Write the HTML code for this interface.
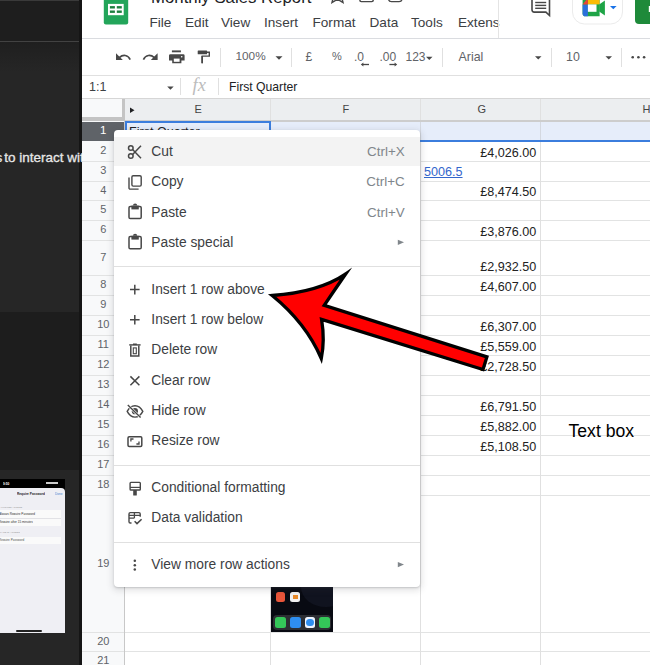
<!DOCTYPE html>
<html><head><meta charset="utf-8">
<style>
*{margin:0;padding:0;box-sizing:border-box}
html,body{width:650px;height:665px;overflow:hidden;background:#fff;font-family:"Liberation Sans",sans-serif}
.a{position:absolute}
.t{position:absolute;white-space:nowrap;line-height:1}
.hl{position:absolute;height:1px;background:#e2e3e3}
.vl{position:absolute;width:1px;background:#e2e3e3}
.rn{position:absolute;left:82px;width:42.5px;text-align:center;font-size:11px;color:#5f6368;line-height:1}
.num{position:absolute;left:420px;width:116.3px;text-align:right;font-size:12.6px;color:#222;white-space:nowrap;line-height:1}
.mi{position:absolute;left:151.3px;font-size:13.8px;color:#3c4043;white-space:nowrap;line-height:1}
.sc{position:absolute;left:300px;width:104.7px;text-align:right;font-size:13.4px;color:#80868b;white-space:nowrap;line-height:1}
.tb{position:absolute;white-space:nowrap;line-height:1;font-size:12px;color:#5f6368}
</style></head><body>

<div class="a" style="left:0;top:0;width:82px;height:665px;background:#262626"></div>
<div class="a" style="left:0;top:0;width:82px;height:41px;background:#1e1e1e"></div>
<div class="a" style="left:0;top:42px;width:82px;height:30px;background:linear-gradient(#1f1f1f,#262626)"></div>
<div class="a" style="left:0;top:312px;width:82px;height:158px;background:#1d1d1d"></div>
<div class="a" style="left:0;top:0;width:80px;height:1px;background:#3a3a3a"></div>
<div class="a" style="left:0;top:41px;width:80px;height:1px;background:#424242"></div>
<div class="a" style="left:79px;top:0;width:3px;height:665px;background:#151515"></div>
<div class="t" style="left:4.2px;top:150.9px;font-size:13.5px;color:#e8e8e8;-webkit-text-stroke:0.3px #e8e8e8">to interact with</div>
<div class="t" style="left:-4.6px;top:150.9px;font-size:13.5px;color:#e8e8e8;-webkit-text-stroke:0.3px #e8e8e8">s</div>
<div class="a" style="left:0;top:478.5px;width:65px;height:154px;background:#000"></div>
<div class="a" style="left:0;top:487.5px;width:64.5px;height:145px;background:#efeff4;border-radius:0 4px 0 0"></div>
<div class="a" style="left:0;top:509.5px;width:61px;height:16px;background:#fafafa"></div>
<div class="a" style="left:0;top:536.5px;width:61px;height:7px;background:#fafafa"></div>
<div class="a" style="left:0;top:517.5px;width:61px;height:1px;background:#e2e2e6"></div>
<div class="a" style="left:16px;top:630px;width:25.5px;height:1.6px;background:#222;border-radius:1px"></div>
<div class="t" style="left:3px;top:482px;font-size:6.4px;color:#fff;font-weight:bold;transform:scale(0.5);transform-origin:0 0">9:50</div>
<div class="t" style="left:16.5px;top:492.3px;font-size:6.4px;color:#222;font-weight:bold;transform:scale(0.5);transform-origin:0 0">Require Password</div>
<div class="t" style="left:54.5px;top:492.3px;font-size:6.4px;color:#4a86d0;font-weight:normal;transform:scale(0.5);transform-origin:0 0">Done</div>
<div class="t" style="left:-0.5px;top:505.6px;font-size:4.8px;color:#999;font-weight:normal;transform:scale(0.5);transform-origin:0 0">ALLOWED ACCESS</div>
<div class="t" style="left:-1px;top:511.8px;font-size:6.2px;color:#333;font-weight:normal;transform:scale(0.5);transform-origin:0 0">Always Require Password</div>
<div class="t" style="left:-1px;top:520px;font-size:6.2px;color:#333;font-weight:normal;transform:scale(0.5);transform-origin:0 0">Require after 15 minutes</div>
<div class="t" style="left:-0.5px;top:531.3px;font-size:4.8px;color:#999;font-weight:normal;transform:scale(0.5);transform-origin:0 0">FACE ID ACCESS</div>
<div class="t" style="left:-1px;top:538.2px;font-size:6.2px;color:#555;font-weight:normal;transform:scale(0.5);transform-origin:0 0">Require Password</div>
<div class="a" style="left:46px;top:481.5px;width:12px;height:2px;background:#ccc"></div>
<div class="a" style="left:82px;top:0;width:568px;height:665px;background:#fff"></div>
<div class="t" style="left:151px;top:-9.7px;font-size:16.8px;color:#202124">Monthly Sales Report</div>
<div class="t" style="left:149.5px;top:16px;font-size:13.6px;color:#3c4043">File</div>
<div class="t" style="left:185px;top:16px;font-size:13.6px;color:#3c4043">Edit</div>
<div class="t" style="left:221px;top:16px;font-size:13.6px;color:#3c4043">View</div>
<div class="t" style="left:264px;top:16px;font-size:13.6px;color:#3c4043">Insert</div>
<div class="t" style="left:312.5px;top:16px;font-size:13.6px;color:#3c4043">Format</div>
<div class="t" style="left:369.5px;top:16px;font-size:13.6px;color:#3c4043">Data</div>
<div class="t" style="left:411px;top:16px;font-size:13.6px;color:#3c4043">Tools</div>
<div class="t" style="left:458px;top:16px;font-size:13.6px;color:#3c4043">Extens</div>
<div class="a" style="left:498px;top:0;width:1px;height:38px;background:#e4e4e4"></div>
<div class="hl" style="left:82px;top:38px;width:568px;background:#dadce0"></div>
<div class="hl" style="left:82px;top:75px;width:568px;background:#e0e0e0"></div>
<div class="hl" style="left:82px;top:98px;width:568px;background:#d6d6d6"></div>
<div class="tb" style="left:235.5px;top:50.6px;font-size:11.8px">100%</div>
<div class="tb" style="left:305.5px;top:50.8px;font-size:12px">£</div>
<div class="tb" style="left:332px;top:50.8px;font-size:11px">%</div>
<div class="tb" style="left:354px;top:50.8px;font-size:12px">.0</div>
<div class="tb" style="left:379.5px;top:50.8px;font-size:12px">.00</div>
<div class="tb" style="left:405.5px;top:50.8px;font-size:12px">123</div>
<div class="tb" style="left:458.5px;top:51px;font-size:12.4px">Arial</div>
<div class="tb" style="left:566px;top:51px;font-size:12.4px">10</div>
<div class="vl" style="left:220px;top:48px;height:19px;background:#e0e0e0"></div>
<div class="vl" style="left:291px;top:48px;height:19px;background:#e0e0e0"></div>
<div class="vl" style="left:442px;top:48px;height:19px;background:#e0e0e0"></div>
<div class="vl" style="left:551px;top:48px;height:19px;background:#e0e0e0"></div>
<div class="vl" style="left:621px;top:48px;height:19px;background:#e0e0e0"></div>
<div class="t" style="left:89px;top:81px;font-size:12.5px;color:#3c4043">1:1</div>
<div class="vl" style="left:180px;top:78px;height:17px;background:#e0e0e0"></div>
<div class="t" style="left:192.5px;top:76.3px;font-size:18.5px;color:#bcbcbc;font-family:'Liberation Serif',serif;font-style:italic">fx</div>
<div class="vl" style="left:218px;top:78px;height:17px;background:#e0e0e0"></div>
<div class="t" style="left:229px;top:81.3px;font-size:12.2px;color:#202124">First Quarter</div>
<div class="a" style="left:82px;top:99px;width:568px;height:22px;background:#eceef0"></div>
<div class="a" style="left:82px;top:99px;width:40px;height:18px;background:#f8f9fa"></div>
<div class="a" style="left:82px;top:117px;width:43px;height:4px;background:#c4c4c4"></div>
<div class="a" style="left:122px;top:99px;width:3px;height:22px;background:#c4c4c4"></div>
<div class="t" style="left:194.5px;top:104px;font-size:11px;color:#444">E</div>
<div class="t" style="left:342.5px;top:104px;font-size:11px;color:#444">F</div>
<div class="t" style="left:477.5px;top:104px;font-size:11px;color:#444">G</div>
<div class="t" style="left:642.5px;top:104px;font-size:11px;color:#444">H</div>
<div class="a" style="left:82px;top:121px;width:42px;height:544px;background:#f8f9fa"></div>
<div class="rn" style="top:124.2px;color:#fff">1</div>
<div class="hl" style="left:82px;top:161px;width:568px"></div>
<div class="rn" style="top:144.7px;color:#5f6368">2</div>
<div class="hl" style="left:82px;top:181px;width:568px"></div>
<div class="rn" style="top:165.2px;color:#5f6368">3</div>
<div class="hl" style="left:82px;top:200px;width:568px"></div>
<div class="rn" style="top:184.7px;color:#5f6368">4</div>
<div class="hl" style="left:82px;top:220px;width:568px"></div>
<div class="rn" style="top:204.2px;color:#5f6368">5</div>
<div class="hl" style="left:82px;top:240px;width:568px"></div>
<div class="rn" style="top:224.2px;color:#5f6368">6</div>
<div class="hl" style="left:82px;top:275px;width:568px"></div>
<div class="rn" style="top:251.7px;color:#5f6368">7</div>
<div class="hl" style="left:82px;top:295px;width:568px"></div>
<div class="rn" style="top:279.2px;color:#5f6368">8</div>
<div class="hl" style="left:82px;top:315px;width:568px"></div>
<div class="rn" style="top:299.2px;color:#5f6368">9</div>
<div class="hl" style="left:82px;top:335px;width:568px"></div>
<div class="rn" style="top:319.2px;color:#5f6368">10</div>
<div class="hl" style="left:82px;top:355px;width:568px"></div>
<div class="rn" style="top:339.2px;color:#5f6368">11</div>
<div class="hl" style="left:82px;top:375px;width:568px"></div>
<div class="rn" style="top:359.2px;color:#5f6368">12</div>
<div class="hl" style="left:82px;top:395px;width:568px"></div>
<div class="rn" style="top:379.2px;color:#5f6368">13</div>
<div class="hl" style="left:82px;top:415px;width:568px"></div>
<div class="rn" style="top:399.2px;color:#5f6368">14</div>
<div class="hl" style="left:82px;top:435px;width:568px"></div>
<div class="rn" style="top:419.2px;color:#5f6368">15</div>
<div class="hl" style="left:82px;top:455px;width:568px"></div>
<div class="rn" style="top:439.2px;color:#5f6368">16</div>
<div class="hl" style="left:82px;top:475px;width:568px"></div>
<div class="rn" style="top:459.2px;color:#5f6368">17</div>
<div class="hl" style="left:82px;top:495px;width:568px"></div>
<div class="rn" style="top:479.2px;color:#5f6368">18</div>
<div class="hl" style="left:82px;top:632px;width:568px"></div>
<div class="rn" style="top:557.7px;color:#5f6368">19</div>
<div class="hl" style="left:82px;top:651px;width:568px"></div>
<div class="rn" style="top:635.7px;color:#5f6368">20</div>
<div class="hl" style="left:82px;top:671px;width:568px"></div>
<div class="rn" style="top:655.2px;color:#5f6368">21</div>
<div class="vl" style="left:124px;top:121px;height:544px;background:#c8c8c8"></div>
<div class="vl" style="left:270px;top:99px;height:566px;background:#e0e0e0"></div>
<div class="vl" style="left:420px;top:99px;height:566px;background:#e0e0e0"></div>
<div class="vl" style="left:540px;top:99px;height:566px;background:#e0e0e0"></div>
<div class="a" style="left:125px;top:120px;width:525px;height:2px;background:#cdcdcd"></div>
<div class="a" style="left:82px;top:121.5px;width:42px;height:19px;background:#5f6368"></div>
<div class="rn" style="top:125px;color:#fff;font-size:11.5px">1</div>
<div class="a" style="left:125px;top:122px;width:525px;height:18px;background:#e6edfa"></div>
<div class="a" style="left:125px;top:140px;width:525px;height:2px;background:#3b7ddd"></div>
<div class="a" style="left:125px;top:121px;width:146px;height:21px;border:2px solid #3b7ddd"></div>
<div class="t" style="left:129px;top:126px;font-size:12.6px;color:#202124">First Quarter</div>
<div class="vl" style="left:420px;top:122px;height:18px;background:#d4d8e0"></div>
<div class="vl" style="left:540px;top:122px;height:18px;background:#d4d8e0"></div>
<svg class="a" style="left:0;top:0" width="650" height="665"><path d="M130 107.5 L134.5 110.3 L130 113z" fill="#202124"/></svg>
<div class="num" style="top:146.8px">£4,026.00</div>
<div class="num" style="top:185.8px">£8,474.50</div>
<div class="num" style="top:225.8px">£3,876.00</div>
<div class="num" style="top:260.8px">£2,932.50</div>
<div class="num" style="top:280.8px">£4,607.00</div>
<div class="num" style="top:320.8px">£6,307.00</div>
<div class="num" style="top:340.8px">£5,559.00</div>
<div class="num" style="top:360.8px">£2,728.50</div>
<div class="num" style="top:400.8px">£6,791.50</div>
<div class="num" style="top:420.8px">£5,882.00</div>
<div class="num" style="top:440.8px">£5,108.50</div>
<div class="t" style="left:424px;top:166.4px;font-size:12.6px;color:#3366cc;text-decoration:underline">5006.5</div>
<div class="t" style="left:568.5px;top:422.5px;font-size:17.6px;color:#000">Text box</div>
<div class="a" style="left:271px;top:587px;width:62px;height:45px;background:#080a12;overflow:hidden"><div class="a" style="left:30px;top:-20px;width:50px;height:40px;border-radius:50%;background:#10131f"></div><div class="a" style="left:4.7px;top:5.4px;width:9.8px;height:9.8px;border-radius:2.5px;background:#e8553a"></div><div class="a" style="left:19px;top:5.4px;width:10px;height:9.8px;border-radius:2.5px;background:#f2f2f2"></div><div class="a" style="left:22px;top:8px;width:5px;height:4px;background:#e88a2a"></div><div class="a" style="left:2px;top:27.6px;width:58px;height:15.7px;border-radius:4px;background:#2c2e33"></div><div class="a" style="left:4px;top:30px;width:10.5px;height:10.5px;border-radius:2.5px;background:#34c759"></div><div class="a" style="left:19px;top:30px;width:10.5px;height:10.5px;border-radius:2.5px;background:#2e8ef0"></div><div class="a" style="left:33.5px;top:30px;width:10.5px;height:10.5px;border-radius:2.5px;background:#eef4ff"></div><div class="a" style="left:35px;top:31.5px;width:7.5px;height:7.5px;border-radius:50%;background:#2e8ef0"></div><div class="a" style="left:48px;top:30px;width:10.5px;height:10.5px;border-radius:2.5px;background:#34c759"></div></div>
<div class="a" style="left:114px;top:130px;width:306px;height:457px;background:#fff;border-radius:4px;box-shadow:0 2px 6px 2px rgba(60,64,67,.13),0 1px 2px rgba(60,64,67,.22)"></div>
<div class="a" style="left:114px;top:137px;width:306px;height:29px;background:#f3f3f3"></div>
<div class="hl" style="left:114px;top:266px;width:306px;background:#e0e0e0"></div>
<div class="hl" style="left:114px;top:465px;width:306px;background:#e0e0e0"></div>
<div class="hl" style="left:114px;top:542px;width:306px;background:#e0e0e0"></div>
<div class="mi" style="top:145.2px">Cut</div>
<div class="sc" style="top:145.2px">Ctrl+X</div>
<div class="mi" style="top:175.4px">Copy</div>
<div class="sc" style="top:175.4px">Ctrl+C</div>
<div class="mi" style="top:205.5px">Paste</div>
<div class="sc" style="top:205.5px">Ctrl+V</div>
<div class="mi" style="top:235.5px">Paste special</div>
<div class="mi" style="top:282.9px">Insert 1 row above</div>
<div class="mi" style="top:313.0px">Insert 1 row below</div>
<div class="mi" style="top:343.4px">Delete row</div>
<div class="mi" style="top:373.5px">Clear row</div>
<div class="mi" style="top:403.7px">Hide row</div>
<div class="mi" style="top:433.8px">Resize row</div>
<div class="mi" style="top:481.0px">Conditional formatting</div>
<div class="mi" style="top:511.2px">Data validation</div>
<div class="mi" style="top:557.7px">View more row actions</div>
<svg class="a" style="left:0;top:0" width="650" height="665" viewBox="0 0 650 665"><path d="M116 53.2 L116 60 L122.8 60 Z" fill="#474747"/><path d="M119.2 57.6 C123 54.4 127.8 54.6 130.2 59.6" fill="none" stroke="#474747" stroke-width="1.7"/><path d="M157.6 53.2 L157.6 60 L150.8 60 Z" fill="#474747"/><path d="M154.4 57.6 C150.6 54.4 145.8 54.6 143.4 59.6" fill="none" stroke="#474747" stroke-width="1.7"/><rect x="171.9" y="50.4" width="9" height="1.9" fill="#474747"/><path d="M170.4 54.2 h12.8 a1.4 1.4 0 0 1 1.4 1.4 v5 h-3.2 v2.6 h-9.2 v-2.6 h-3.2 v-5 a1.4 1.4 0 0 1 1.4 -1.4z" fill="#474747"/><rect x="173.8" y="58.6" width="5.8" height="3.2" fill="#fff"/><circle cx="181.7" cy="56.8" r="0.8" fill="#fff"/><rect x="197.7" y="50.5" width="9.4" height="3.8" rx="0.6" fill="#474747"/><path d="M207 52.3 h2.3 v3.8 h-7.1 v7.1" fill="none" stroke="#474747" stroke-width="1.4"/><rect x="201.4" y="56" width="1.6" height="7.2" fill="#474747"/><path d="M275.5 56.2 h7 l-3.5 3.5z" fill="#474747"/><path d="M426 56.8 h6.5 l-3.25 3.25z" fill="#474747"/><path d="M535 56.2 h6.5 l-3.25 3.25z" fill="#474747"/><path d="M605.5 56.2 h6.5 l-3.25 3.25z" fill="#474747"/><path d="M167.2 86.6 h6.5 l-3.25 3.25z" fill="#474747"/><path d="M362.6 64.5 h6.4" stroke="#474747" stroke-width="1.3"/><path d="M360.8 64.5 l2.6 -2 v4z" fill="#474747"/><path d="M389.4 64.5 h6" stroke="#474747" stroke-width="1.3"/><path d="M397.2 64.5 l-2.6 -2 v4z" fill="#474747"/><circle cx="632.7" cy="57.3" r="1.3" fill="#474747"/><circle cx="638.4" cy="57.3" r="1.3" fill="#474747"/><circle cx="644.1" cy="57.3" r="1.3" fill="#474747"/><path d="M103.8 -2 h24.4 v24.4 a2 2 0 0 1 -2 2 h-20.4 a2 2 0 0 1 -2 -2z" fill="#23a55a"/><rect x="108" y="3.9" width="15.7" height="11.3" fill="#fff"/><rect x="109.9" y="6.1" width="5" height="2.4" fill="#1e8040"/><rect x="116.8" y="6.1" width="5" height="2.4" fill="#1e8040"/><rect x="109.9" y="10.5" width="5" height="2.4" fill="#1e8040"/><rect x="116.8" y="10.5" width="5" height="2.4" fill="#1e8040"/><path d="M337.5 -14 L340 -8 L346 -7.5 L341.5 -3.5 L343 2.5 L337.5 -0.7 L332 2.5 L333.5 -3.5 L329 -7.5 L335 -8z" fill="none" stroke="#474747" stroke-width="1.4"/><rect x="359.8" y="-8" width="13.5" height="9.6" rx="1.5" fill="none" stroke="#474747" stroke-width="1.4"/><rect x="388.5" y="-8" width="13.5" height="9.6" rx="3" fill="none" stroke="#474747" stroke-width="1.4"/><path d="M532 -2 v11.8 a2.3 2.3 0 0 0 2.3 2.3 h11.6 l3.6 3.4 v-17.5" fill="none" stroke="#474747" stroke-width="1.6"/><rect x="535.2" y="1.8" width="11" height="1.4" fill="#474747"/><rect x="535.2" y="4.7" width="11" height="1.4" fill="#474747"/><rect x="535.2" y="7.6000000000000005" width="11" height="1.4" fill="#474747"/><path d="M572.5 -10 v22 a12 12 0 0 0 12 12 h26 a12 12 0 0 0 12 -12 v-22" fill="#fff" stroke="#ebebeb" stroke-width="1"/><path d="M582.6 -2 h17 v18.3 h-14.2 a2.8 2.8 0 0 1 -2.8 -2.8z" fill="#1ea446"/><path d="M582.6 4.4 h5.3 v11.9 h-2.5 a2.8 2.8 0 0 1 -2.8 -2.8z" fill="#2a6fdb"/><path d="M587.9 -2 h11.7 v6.4 h-11.7z" fill="#fbbc04"/><path d="M582.6 4.4 l5.3 -6.4 v6.4z" fill="#ea4335"/><rect x="587.9" y="4.4" width="8.6" height="7.4" fill="#fff"/><path d="M599.2 4.6 L604.9 0.6 V15.4 L599.2 11.4z" fill="#1ea446"/><path d="M610 6 h6.6 l-3.3 3.3z" fill="#1a73e8"/><path d="M635 -5 v25 a4 4 0 0 0 4 4 h20 v-29z" fill="#1e8a3a"/><rect x="648.8" y="6" width="3" height="6" fill="#fff"/><circle cx="130.8" cy="148" r="2.3" fill="none" stroke="#474747" stroke-width="1.5"/><circle cx="130.8" cy="156" r="2.3" fill="none" stroke="#474747" stroke-width="1.5"/><path d="M132.6 149.6 L141 158.2 M132.6 154.4 L141 145.8" stroke="#474747" stroke-width="1.5" fill="none"/><rect x="131.9" y="175.7" width="9.3" height="10.4" rx="1.3" fill="none" stroke="#474747" stroke-width="1.4"/><path d="M129 177.6 v10.3 a1.2 1.2 0 0 0 1.2 1.2 h8.4" fill="none" stroke="#474747" stroke-width="1.4"/><rect x="129" y="206.4" width="12.2" height="12.2" rx="1.3" fill="none" stroke="#474747" stroke-width="1.5"/><path d="M131.4 205.6 h7.4 v3.8 h-7.4z" fill="#474747"/><path d="M133 205.6 a2.1 2.1 0 0 1 4.2 0z" fill="#474747"/><rect x="129" y="236.60000000000002" width="12.2" height="12.2" rx="1.3" fill="none" stroke="#474747" stroke-width="1.5"/><path d="M131.4 235.8 h7.4 v3.8 h-7.4z" fill="#474747"/><path d="M133 235.8 a2.1 2.1 0 0 1 4.2 0z" fill="#474747"/><path d="M130 289.6 h9.6 M134.8 284.8 v9.6" stroke="#474747" stroke-width="1.5" fill="none"/><path d="M130 319.8 h9.6 M134.8 315.0 v9.6" stroke="#474747" stroke-width="1.5" fill="none"/><path d="M129.2 344.9 h11.4" stroke="#474747" stroke-width="1.4"/><path d="M133 344.3 h3.8" stroke="#474747" stroke-width="1.6"/><path d="M130.8 345.6 v10.5 h8 v-10.5" fill="none" stroke="#474747" stroke-width="1.5"/><rect x="133.3" y="347.9" width="3" height="5.8" fill="none" stroke="#474747" stroke-width="1.1"/><path d="M130.4 376.4 L139.4 385.2 M139.4 376.4 L130.4 385.2" stroke="#474747" stroke-width="1.5" fill="none"/><path d="M127.2 411.4 C131 403.8 139 403.8 142.8 411.4 C139 419 131 419 127.2 411.4z" fill="none" stroke="#474747" stroke-width="1.4"/><circle cx="134.9" cy="411.2" r="3.1" fill="#474747"/><path d="M127.8 405 L140.6 417.6" stroke="#fff" stroke-width="2.5"/><path d="M127.8 405 L140.6 417.6" stroke="#474747" stroke-width="1.4"/><rect x="128" y="436.7" width="13.8" height="9.8" rx="1.2" fill="none" stroke="#474747" stroke-width="1.5"/><path d="M130.9 441.6 v-2.6 h2.6" fill="none" stroke="#474747" stroke-width="1.3"/><path d="M139 441.4 v2.6 h-2.6" fill="none" stroke="#474747" stroke-width="1.3"/><rect x="130.1" y="482.4" width="10.2" height="7.6" rx="0.8" fill="none" stroke="#474747" stroke-width="1.4"/><path d="M130.1 487.4 h10.2" stroke="#474747" stroke-width="1.2"/><rect x="133.2" y="490" width="3.6" height="5.6" rx="0.6" fill="#474747"/><path d="M131.5 523 h-1.2 a1.3 1.3 0 0 1 -1.3 -1.3 v-7.8 a1.3 1.3 0 0 1 1.3 -1.3 h8.6 a1.3 1.3 0 0 1 1.3 1.3 v2.8" fill="none" stroke="#474747" stroke-width="1.4"/><path d="M129 515.3 h11 M129 518.2 h5.2 M134.4 512.6 v5.6" stroke="#474747" stroke-width="1.3" fill="none"/><path d="M134.6 521.2 L137 523.6 L141.6 519.2" stroke="#474747" stroke-width="1.5" fill="none"/><circle cx="134.8" cy="560.8" r="1.25" fill="#474747"/><circle cx="134.8" cy="565.2" r="1.25" fill="#474747"/><circle cx="134.8" cy="569.6" r="1.25" fill="#474747"/><path d="M397.8 239.70000000000002 L404 242.3 L397.8 244.9z" fill="#80868b"/><path d="M397.8 562.0 L404 564.6 L397.8 567.2z" fill="#80868b"/><path d="M272.2 295.5 Q319 292 345.8 273.8 Q336 288 324.2 305.4 L486.9 356.9 L483.0 369.5 L321.6 319.4 Q325 340 321.3 358.5 Q306 323 272.2 295.5z" fill="#f00" stroke="#000" stroke-width="3.3" stroke-linejoin="miter" stroke-miterlimit="10"/></svg>
</body></html>
